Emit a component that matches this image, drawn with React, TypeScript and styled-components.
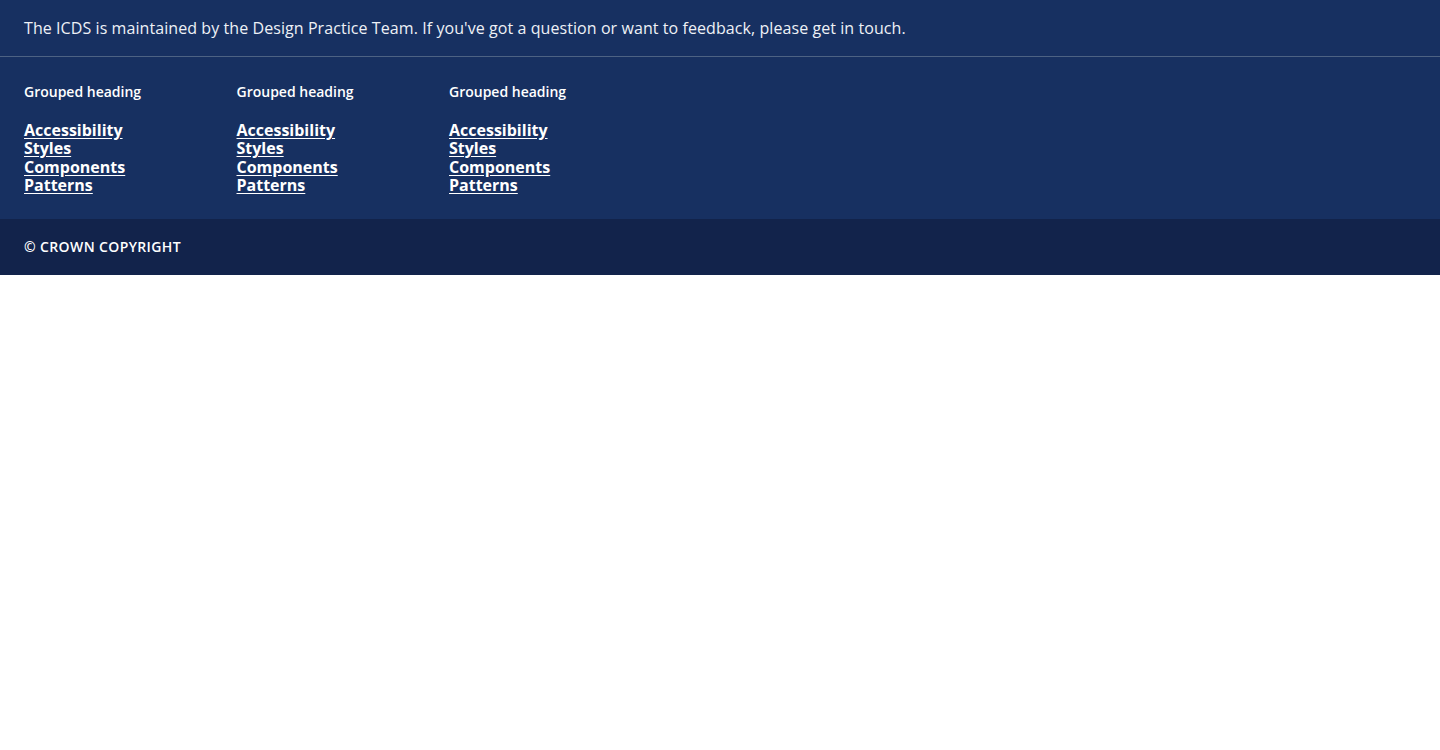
import React from "react";
import styled, { createGlobalStyle } from "styled-components";

const Global = createGlobalStyle`
  html, body { margin: 0; padding: 0; background: #ffffff; }
  body { font-family: "Open Sans", "Noto Sans", sans-serif; }
`;

const Footer = styled.footer`
  background: #173061;
  color: #ffffff;
  font-family: "Open Sans", "Noto Sans", sans-serif;
`;

const Intro = styled.div`
  padding: 16px 24px;
  font-size: 16px;
  line-height: 24px;
  letter-spacing: 0.075px;
  color: #eef1f6;
  border-bottom: 1px solid #4d6283;
`;

const Groups = styled.div`
  display: flex;
  padding: 25px 24px 24px;
`;

const Group = styled.div`
  width: 212.5px;
  display: flex;
  flex-direction: column;
`;

const Heading = styled.h2`
  margin: 0 0 19px;
  font-size: 14px;
  font-weight: 600;
  line-height: 20px;
`;

const LinkList = styled.ul`
  list-style: none;
  margin: 0;
  padding: 0;
`;

const LinkItem = styled.li`
  font-size: 16px;
  line-height: 18.4px;
`;

const Link = styled.a`
  color: #ffffff;
  font-weight: 700;
  text-decoration: underline;
  text-underline-offset: 2px;
`;

const Bottom = styled.div`
  background: #12234b;
  padding: 0 24px;
  height: 56px;
  display: flex;
  align-items: center;
  font-size: 14px;
  font-weight: 600;
  letter-spacing: 0.38px;
  text-transform: uppercase;
`;

const links = ["Accessibility", "Styles", "Components", "Patterns"];

export default function App() {
  return (
    <>
      <Global />
      <Footer>
        <Intro>
          The ICDS is maintained by the Design Practice Team. If you've got a question or want to feedback, please get in touch.
        </Intro>
        <Groups>
          {[0, 1, 2].map((g) => (
            <Group key={g}>
              <Heading>Grouped heading</Heading>
              <LinkList>
                {links.map((l) => (
                  <LinkItem key={l}>
                    <Link href="#">{l}</Link>
                  </LinkItem>
                ))}
              </LinkList>
            </Group>
          ))}
        </Groups>
        <Bottom>© Crown copyright</Bottom>
      </Footer>
    </>
  );
}
